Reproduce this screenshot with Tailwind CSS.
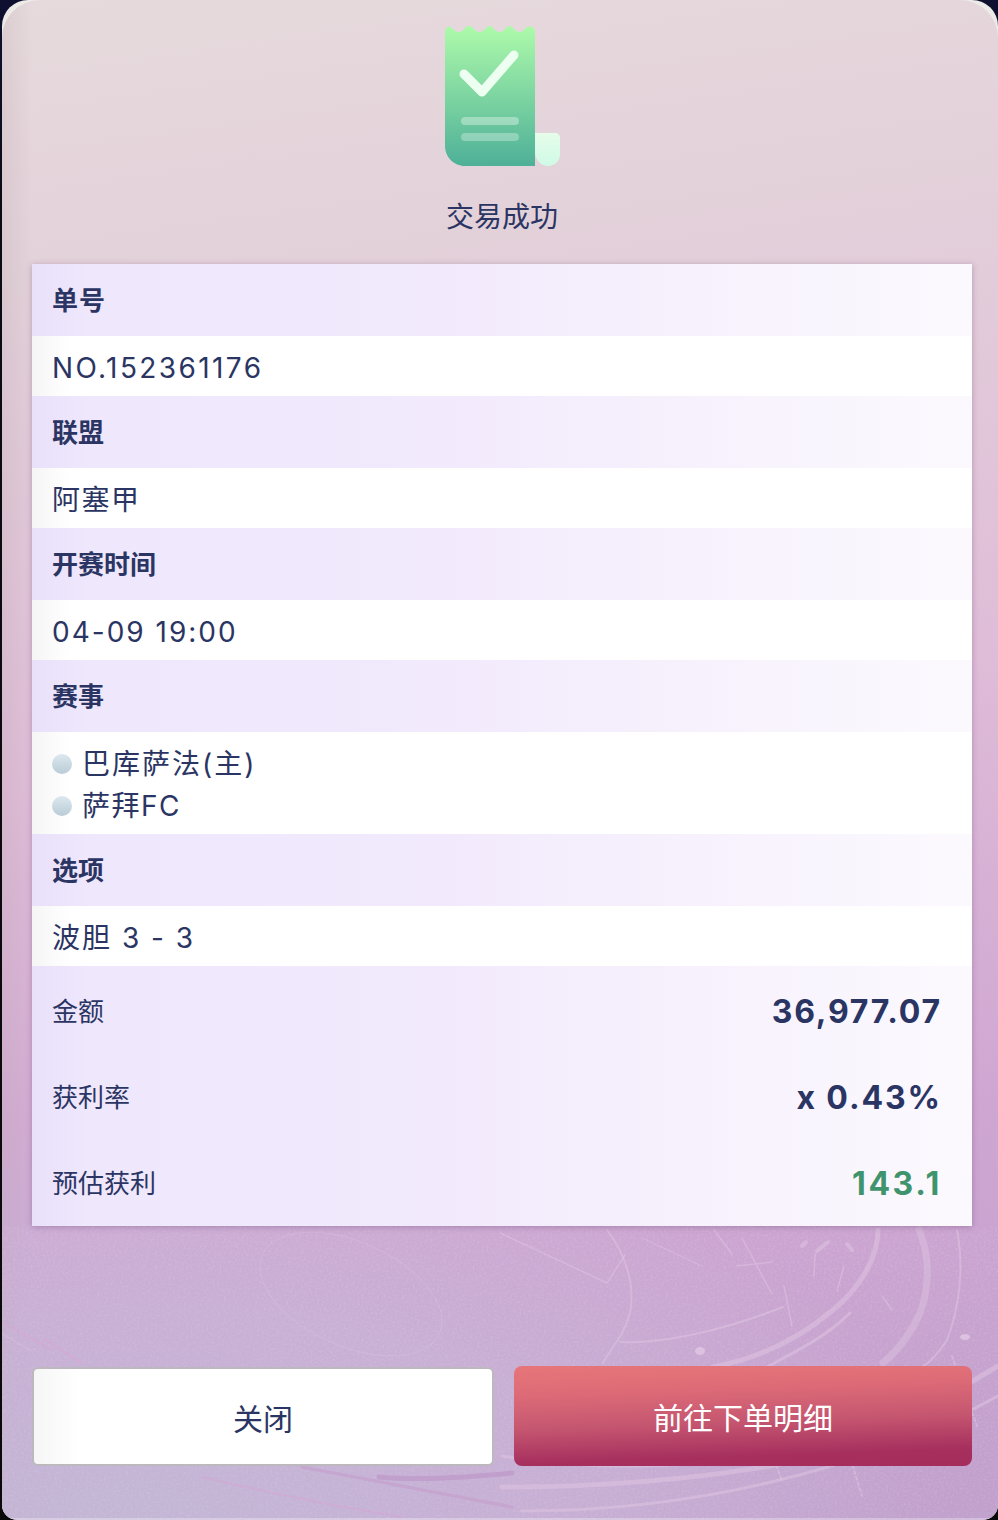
<!DOCTYPE html>
<html lang="zh"><head><meta charset="utf-8">
<script src="https://cdn.jsdelivr.net/npm/@tailwindcss/browser@4"></script>
</head>
<body class="m-0 bg-[#0d0d1f]">
<div class="w-[998px] h-[1520px] overflow-hidden bg-[linear-gradient(180deg,#0f1030_0%,#0b0b14_15%,#0a0a0a_100%)] pl-[2px] font-['Inter','Noto_Sans_CJK_SC',sans-serif] text-[#2b3563]">
<div class="relative w-[996px] h-[1520px] overflow-hidden rounded-t-[26px] rounded-b-[15px] flex flex-col items-center bg-[#ecebe8]">
  <div class="absolute inset-0 overflow-hidden rounded-t-[38px] rounded-b-[15px] bg-[linear-gradient(172deg,#e6dadc_0%,#e3d1da_18%,#dfbcd8_48%,#cfa6d2_75%,#c0a0cc_100%)]">
    <div class="absolute inset-0 bg-[linear-gradient(90deg,#b8a4ac40_0%,#ffffff00_3%)]"></div>
    <div class="absolute inset-x-0 bottom-0 h-[420px] bg-[radial-gradient(ellipse_at_12%_100%,#c3b8d6f0_0%,#c8b4d6b0_38%,#c3b8d600_68%)]"></div>
    <svg class="absolute left-0 top-[1226px]" width="996" height="294" viewBox="0 0 996 294" fill="none" stroke="#dcc2e0" stroke-linecap="round">
      <defs>
        <filter id="n" x="0" y="0" width="100%" height="100%"><feTurbulence type="fractalNoise" baseFrequency="0.45" numOctaves="2" seed="4"/><feColorMatrix values="0 0 0 0 0.88  0 0 0 0 0.72  0 0 0 0 0.9  0 0 0 1.3 -0.55"/></filter>
      </defs>
      <rect width="996" height="294" filter="url(#n)" stroke="none" opacity=".3"/>
      <g stroke-opacity=".6">
        <ellipse cx="349" cy="68" rx="97" ry="52" stroke-width="1" stroke-opacity=".4" transform="rotate(24 349 68)"/>
        <path d="M498 7L605 57L623 29" stroke-width="1.5"/>
        <path d="M605 4C625 30 633 60 628 87C622 110 610 120 601 137" stroke-width="2"/>
        <path d="M618 116C660 118 720 105 781 81" stroke-width="2"/>
        <path d="M876 4C876 30 860 60 831 84C800 110 760 132 711 141" stroke-width="5"/>
        <path d="M848 87C825 110 795 125 765 141" stroke-width="3"/>
        <path d="M917 4C928 30 928 60 918 87C908 110 895 125 881 137" stroke-width="7" stroke-opacity=".5"/>
        <path d="M955 4C962 40 958 80 945 114C938 125 930 135 920 141" stroke-width="2"/>
        <path d="M712 4L730 28M740 12L770 68M782 60L790 100M770 36L735 40M880 70L890 84M813 28L812 50M842 40L835 65" stroke-width="1.5"/>
        <path d="M800 20L804 16M815 25L826 16M845 18L850 24" stroke-width="4"/>
        <ellipse cx="698" cy="125" rx="5" ry="4" fill="#dcc2e0" stroke="none"/>
        <ellipse cx="963" cy="111" rx="5" ry="3" fill="#dcc2e0" stroke="none"/>
        <path d="M500 261C580 262 700 254 800 234C860 218 930 180 996 140" stroke-width="5"/>
        <path d="M520 285C680 285 850 250 996 170" stroke-width="3"/>
        <path d="M500 230C560 240 620 243 690 238" stroke-width="3"/>
        <path d="M760 200L780 255M840 205L860 270M900 180L925 240M950 130L975 200" stroke-width="2" stroke-dasharray="3 3"/>
        <path d="M43 114L80 137" stroke="#d9a5d2" stroke-width="2"/>
        <path d="M0 96L50 124" stroke="#d9a5d2" stroke-width="1.5"/>
        <path d="M200 251C260 265 330 280 400 291" stroke="#d3a6d4" stroke-width="2"/>
        <path d="M300 241C370 255 440 268 510 281" stroke="#c49ccb" stroke-width="3"/>
        <path d="M377 251C420 255 470 251 510 247" stroke="#bd92c8" stroke-width="5"/>
        <path d="M640 12L700 40M0 108L30 125" stroke-width="1"/>
      </g>
    </svg>
    <div class="absolute left-0 right-0 bottom-0 h-[2px] bg-white/30"></div>
  </div>

  <svg class="relative mt-[26px] ml-[5px]" width="116" height="140" viewBox="0 0 116 140">
    <defs>
      <linearGradient id="a" x1="0" y1="0" x2="0" y2="1"><stop offset="0" stop-color="#adfaaa"/><stop offset="1" stop-color="#4eb098"/></linearGradient>
      <linearGradient id="b" x1="0" y1="0" x2="0" y2="1"><stop offset="0" stop-color="#e6fdea"/><stop offset="1" stop-color="#cffae6"/></linearGradient>
    </defs>
    <path d="M0 6C0 1 5-1 8 3C11 7 16 7 19 3C22-1 26-1 29 3C32 7 37 7 40 3C43-1 46-1 49 3C52 7 57 7 60 3C63-1 66-1 69 3C72 7 77 7 80 3C83-1 90 0 90 6V140H20C9 140 0 131 0 120Z" fill="url(#a)"/>
    <path d="M90 107H110C113 107 115 109 115 112V128C115 135 110 140 103 140C96 140 90 134 90 126Z" fill="url(#b)"/>
    <path d="M19 48L37 66L69 29" fill="none" stroke="#ecfff0" stroke-width="9" stroke-linecap="round" stroke-linejoin="round"/>
    <rect x="16" y="91" width="58" height="8" rx="4" fill="#fff" fill-opacity=".35"/>
    <rect x="16" y="107" width="58" height="8" rx="4" fill="#fff" fill-opacity=".3"/>
  </svg>
  <div class="relative mt-[32px] ml-[4px] h-[38px] text-[28px] leading-[38px]">交易成功</div>

  <div class="relative mt-[28px] w-[940px] ml-[4px] shadow-[0_1px_6px_rgba(90,60,100,0.35)] bg-[linear-gradient(90deg,#e9e1fa_0%,#efe7fc_6%,#f1e9fc_40%,#fcf9fe_100%)]">
    <div class="h-[72px] flex items-center px-[20px] text-[26px] font-bold tracking-[1px]">单号</div>
    <div class="h-[60px] flex items-center px-[20px] pt-[4px] text-[28px] tracking-[2.4px] bg-[linear-gradient(90deg,#f5f5f5_0%,#ffffff_4%)]">NO.152361176</div>
    <div class="h-[72px] flex items-center px-[20px] text-[26px] font-bold">联盟</div>
    <div class="h-[60px] flex items-center px-[20px] pt-[4px] text-[28px] tracking-[1.5px] bg-[linear-gradient(90deg,#f5f5f5_0%,#ffffff_4%)]">阿塞甲</div>
    <div class="h-[72px] flex items-center px-[20px] text-[26px] font-bold">开赛时间</div>
    <div class="h-[60px] flex items-center px-[20px] pt-[4px] text-[28px] tracking-[2px] bg-[linear-gradient(90deg,#f5f5f5_0%,#ffffff_4%)]">04-09 19:00</div>
    <div class="h-[72px] flex items-center px-[20px] text-[26px] font-bold">赛事</div>
    <div class="h-[102px] flex flex-col justify-center gap-[4px] px-[20px] pt-[4px] text-[28px] tracking-[1.5px] bg-[linear-gradient(90deg,#f5f5f5_0%,#ffffff_4%)]">
      <div class="h-[38px] flex items-center gap-[10px]"><span class="w-[20px] h-[20px] rounded-full bg-[linear-gradient(180deg,#dde8ef,#b9ccd6)]"></span><span class="tracking-[2px]">巴库萨法(主)</span></div>
      <div class="h-[38px] flex items-center gap-[10px]"><span class="w-[20px] h-[20px] rounded-full bg-[linear-gradient(180deg,#dde8ef,#b9ccd6)]"></span><span>萨拜FC</span></div>
    </div>
    <div class="h-[72px] flex items-center px-[20px] text-[26px] font-bold">选项</div>
    <div class="h-[60px] flex items-center px-[20px] pt-[4px] text-[28px] tracking-[2px] bg-[linear-gradient(90deg,#f5f5f5_0%,#ffffff_4%)] whitespace-pre">波胆 3 - 3</div>
    <div class="h-[260px] flex flex-col pl-[20px] pr-[30px] pt-[2px]">
      <div class="h-[86px] flex items-center justify-between"><span class="text-[26px]">金额</span><span class="pt-[2px] text-[32px] font-bold tracking-[1.8px]">36,977.07</span></div>
      <div class="h-[86px] flex items-center justify-between"><span class="text-[26px]">获利率</span><span class="pt-[2px] text-[32px] font-bold tracking-[1.9px]">x 0.43%</span></div>
      <div class="h-[86px] flex items-center justify-between"><span class="text-[26px]">预估获利</span><span class="pt-[2px] text-[32px] font-bold tracking-[2.6px] text-[#3f946d]">143.1</span></div>
    </div>
  </div>

  <div class="relative mt-[140px] w-[996px] pl-[30px] pr-[24px] flex gap-[20px] items-center">
    <button class="w-[462px] h-[99px] pt-[6px] rounded-[6px] border-[2px] border-[#bdb8bd] text-[30px] text-[#2b3563] bg-[linear-gradient(90deg,#f6f6f6_0%,#ffffff_10%)]">关闭</button>
    <button class="w-[458px] h-[100px] pt-[4px] rounded-[8px] text-[30px] text-white bg-[linear-gradient(178deg,#e67679_0%,#dd6b77_25%,#c55670_55%,#a62f5e_85%,#a52d5c_100%)]">前往下单明细</button>
  </div>
</div>
</div>
</body></html>
